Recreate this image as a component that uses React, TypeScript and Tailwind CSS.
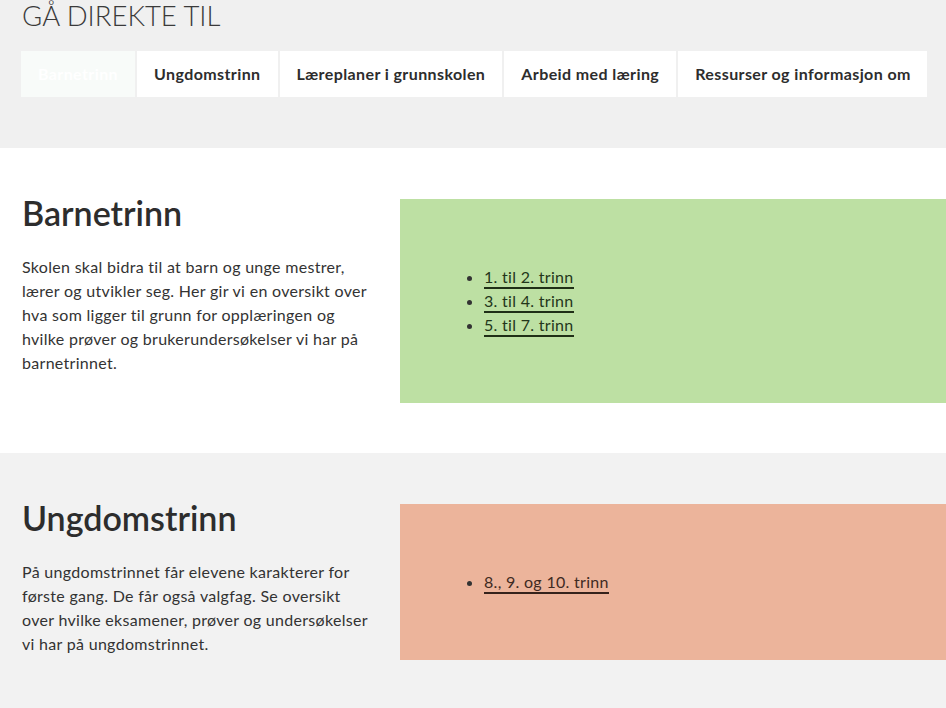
import React from 'react';

const TABS = ['Barnetrinn', 'Ungdomstrinn', 'Læreplaner i grunnskolen', 'Arbeid med læring', 'Ressurser og informasjon om'];

const SECTIONS = [
  {
    title: 'Barnetrinn',
    text: 'Skolen skal bidra til at barn og unge mestrer, lærer og utvikler seg. Her gir vi en oversikt over hva som ligger til grunn for opplæringen og hvilke prøver og brukerundersøkelser vi har på barnetrinnet.',
    links: ['1. til 2. trinn', '3. til 4. trinn', '5. til 7. trinn'],
    bg: 'bg-white',
    box: 'bg-[#bde0a3]',
    link: 'text-[#23361a] border-[#1f2f16]',
  },
  {
    title: 'Ungdomstrinn',
    text: 'På ungdomstrinnet får elevene karakterer for første gang. De får også valgfag. Se oversikt over hvilke eksamener, prøver og undersøkelser vi har på ungdomstrinnet.',
    links: ['8., 9. og 10. trinn'],
    bg: 'bg-[#f2f2f2]',
    box: 'bg-[#ecb49b]',
    link: 'text-[#3f2a22] border-[#35221b]',
  },
];

const App: React.FC = () => {
  return (
    <div className="min-h-[708px] bg-[#f2f2f2] text-[#2d2d2d] font-['Lato',sans-serif]">
      {/* gå direkte til */}
      <section className="bg-[#f0f0f0] px-[21px] h-[148px]">
        <h2 className="text-[27.5px] leading-[32px] font-light uppercase text-[#3a3a3a] pl-px">Gå direkte til</h2>
        <nav className="mt-[19px] flex gap-[2px] w-[906px] overflow-hidden">
          {TABS.map((t, i) => (
            <a
              key={t}
              href="#"
              className={
                'h-[46px] shrink-0 whitespace-nowrap flex items-center px-[17px] text-[16px] tracking-[0.4px] font-bold ' +
                (i === 0 ? 'bg-[#f8fbf9] text-white' : 'bg-white text-[#2d2d2d]')
              }
            >
              {t}
            </a>
          ))}
        </nav>
      </section>

      {SECTIONS.map((s) => (
        <section key={s.title} className={s.bg + ' pt-[51px] pb-[50px]'}>
          <div className="grid grid-cols-[378px_1fr] pl-[22px]">
            <div className="pr-[28px]">
              <h2 className="text-[34px] leading-[30px] font-semibold text-[#2d2d2d] -mt-px">{s.title}</h2>
              <p className="mt-[27px] text-[16px] leading-[24px] tracking-[0.3px] text-[#333]">{s.text}</p>
            </div>
            <div className={s.box + ' py-[66px] pl-[70px]'}>
              <ul className="list-disc pl-[14px] text-[16px] leading-[24px] tracking-[0.3px]">
                {s.links.map((l) => (
                  <li key={l} className="marker:text-[#333]">
                    <a href="#" className={s.link + ' border-b-2 pb-[1px]'}>{l}</a>
                  </li>
                ))}
              </ul>
            </div>
          </div>
        </section>
      ))}
    </div>
  );
};

export default App;
